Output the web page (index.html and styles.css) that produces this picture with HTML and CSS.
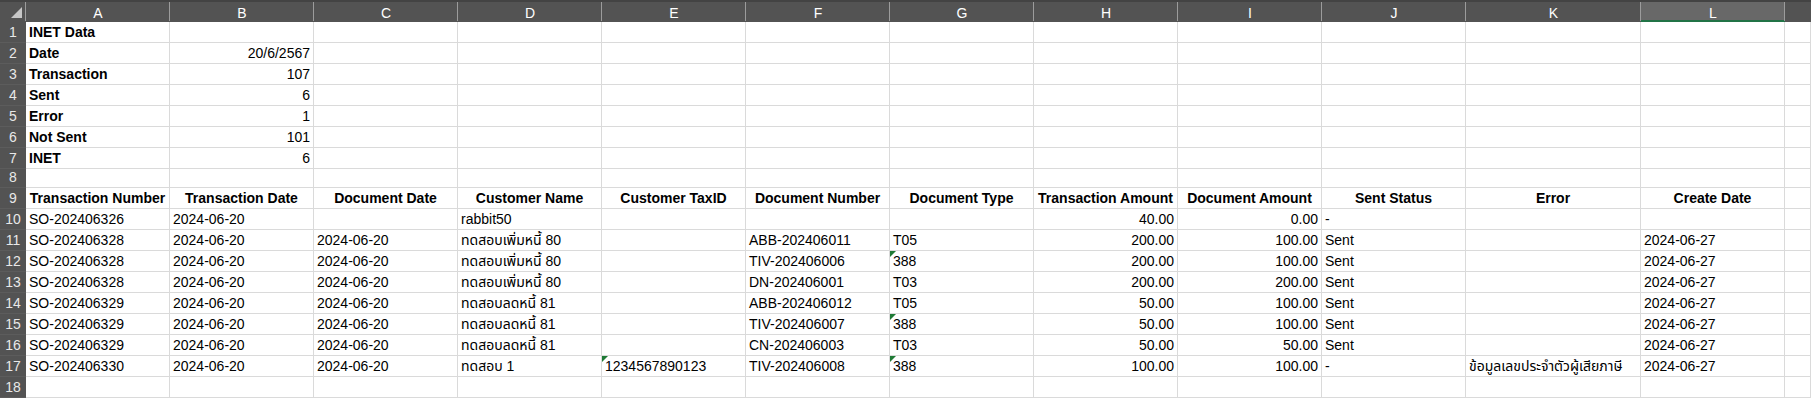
FILE: index.html
```html
<!DOCTYPE html>
<html>
<head>
<meta charset="utf-8">
<link rel="stylesheet" href="styles.css">
</head>
<body>
<div class="sheet">
  <div class="corner"><svg width="12" height="12" viewBox="0 0 12 12"><polygon points="11,0 11,11 0,11" fill="#c6c6c6"/></svg></div>
  <div class="hd">A</div><div class="hd">B</div><div class="hd">C</div><div class="hd">D</div><div class="hd">E</div><div class="hd">F</div><div class="hd">G</div><div class="hd">H</div><div class="hd">I</div><div class="hd">J</div><div class="hd">K</div><div class="hd sel">L</div><div class="hd last"></div>

  <div class="rh">1</div><div class="c b">INET Data</div><div class="c"></div><div class="c"></div><div class="c"></div><div class="c"></div><div class="c"></div><div class="c"></div><div class="c"></div><div class="c"></div><div class="c"></div><div class="c"></div><div class="c"></div><div class="c"></div>
  <div class="rh">2</div><div class="c b">Date</div><div class="c r">20/6/2567</div><div class="c"></div><div class="c"></div><div class="c"></div><div class="c"></div><div class="c"></div><div class="c"></div><div class="c"></div><div class="c"></div><div class="c"></div><div class="c"></div><div class="c"></div>
  <div class="rh">3</div><div class="c b">Transaction</div><div class="c r">107</div><div class="c"></div><div class="c"></div><div class="c"></div><div class="c"></div><div class="c"></div><div class="c"></div><div class="c"></div><div class="c"></div><div class="c"></div><div class="c"></div><div class="c"></div>
  <div class="rh">4</div><div class="c b">Sent</div><div class="c r">6</div><div class="c"></div><div class="c"></div><div class="c"></div><div class="c"></div><div class="c"></div><div class="c"></div><div class="c"></div><div class="c"></div><div class="c"></div><div class="c"></div><div class="c"></div>
  <div class="rh">5</div><div class="c b">Error</div><div class="c r">1</div><div class="c"></div><div class="c"></div><div class="c"></div><div class="c"></div><div class="c"></div><div class="c"></div><div class="c"></div><div class="c"></div><div class="c"></div><div class="c"></div><div class="c"></div>
  <div class="rh">6</div><div class="c b">Not Sent</div><div class="c r">101</div><div class="c"></div><div class="c"></div><div class="c"></div><div class="c"></div><div class="c"></div><div class="c"></div><div class="c"></div><div class="c"></div><div class="c"></div><div class="c"></div><div class="c"></div>
  <div class="rh">7</div><div class="c b">INET</div><div class="c r">6</div><div class="c"></div><div class="c"></div><div class="c"></div><div class="c"></div><div class="c"></div><div class="c"></div><div class="c"></div><div class="c"></div><div class="c"></div><div class="c"></div><div class="c"></div>
  <div class="rh">8</div><div class="c"></div><div class="c"></div><div class="c"></div><div class="c"></div><div class="c"></div><div class="c"></div><div class="c"></div><div class="c"></div><div class="c"></div><div class="c"></div><div class="c"></div><div class="c"></div><div class="c"></div>
  <div class="rh">9</div><div class="c b m">Transaction Number</div><div class="c b m">Transaction Date</div><div class="c b m">Document Date</div><div class="c b m">Customer Name</div><div class="c b m">Customer TaxID</div><div class="c b m">Document Number</div><div class="c b m">Document Type</div><div class="c b m">Transaction Amount</div><div class="c b m">Document Amount</div><div class="c b m">Sent Status</div><div class="c b m">Error</div><div class="c b m">Create Date</div><div class="c"></div>
  <div class="rh">10</div><div class="c">SO-202406326</div><div class="c">2024-06-20</div><div class="c"></div><div class="c">rabbit50</div><div class="c"></div><div class="c"></div><div class="c"></div><div class="c r">40.00</div><div class="c r">0.00</div><div class="c">-</div><div class="c"></div><div class="c"></div><div class="c"></div>
  <div class="rh">11</div><div class="c">SO-202406328</div><div class="c">2024-06-20</div><div class="c">2024-06-20</div><div class="c">ทดสอบเพิ่มหนี้ 80</div><div class="c"></div><div class="c">ABB-202406011</div><div class="c">T05</div><div class="c r">200.00</div><div class="c r">100.00</div><div class="c">Sent</div><div class="c"></div><div class="c">2024-06-27</div><div class="c"></div>
  <div class="rh">12</div><div class="c">SO-202406328</div><div class="c">2024-06-20</div><div class="c">2024-06-20</div><div class="c">ทดสอบเพิ่มหนี้ 80</div><div class="c"></div><div class="c">TIV-202406006</div><div class="c"><span class="flag"></span>388</div><div class="c r">200.00</div><div class="c r">100.00</div><div class="c">Sent</div><div class="c"></div><div class="c">2024-06-27</div><div class="c"></div>
  <div class="rh">13</div><div class="c">SO-202406328</div><div class="c">2024-06-20</div><div class="c">2024-06-20</div><div class="c">ทดสอบเพิ่มหนี้ 80</div><div class="c"></div><div class="c">DN-202406001</div><div class="c">T03</div><div class="c r">200.00</div><div class="c r">200.00</div><div class="c">Sent</div><div class="c"></div><div class="c">2024-06-27</div><div class="c"></div>
  <div class="rh">14</div><div class="c">SO-202406329</div><div class="c">2024-06-20</div><div class="c">2024-06-20</div><div class="c">ทดสอบลดหนี้ 81</div><div class="c"></div><div class="c">ABB-202406012</div><div class="c">T05</div><div class="c r">50.00</div><div class="c r">100.00</div><div class="c">Sent</div><div class="c"></div><div class="c">2024-06-27</div><div class="c"></div>
  <div class="rh">15</div><div class="c">SO-202406329</div><div class="c">2024-06-20</div><div class="c">2024-06-20</div><div class="c">ทดสอบลดหนี้ 81</div><div class="c"></div><div class="c">TIV-202406007</div><div class="c"><span class="flag"></span>388</div><div class="c r">50.00</div><div class="c r">100.00</div><div class="c">Sent</div><div class="c"></div><div class="c">2024-06-27</div><div class="c"></div>
  <div class="rh">16</div><div class="c">SO-202406329</div><div class="c">2024-06-20</div><div class="c">2024-06-20</div><div class="c">ทดสอบลดหนี้ 81</div><div class="c"></div><div class="c">CN-202406003</div><div class="c">T03</div><div class="c r">50.00</div><div class="c r">50.00</div><div class="c">Sent</div><div class="c"></div><div class="c">2024-06-27</div><div class="c"></div>
  <div class="rh">17</div><div class="c">SO-202406330</div><div class="c">2024-06-20</div><div class="c">2024-06-20</div><div class="c">ทดสอบ 1</div><div class="c"><span class="flag"></span>1234567890123</div><div class="c">TIV-202406008</div><div class="c"><span class="flag"></span>388</div><div class="c r">100.00</div><div class="c r">100.00</div><div class="c">-</div><div class="c">ข้อมูลเลขประจำตัวผู้เสียภาษี</div><div class="c">2024-06-27</div><div class="c"></div>
  <div class="rh">18</div><div class="c"></div><div class="c"></div><div class="c"></div><div class="c"></div><div class="c"></div><div class="c"></div><div class="c"></div><div class="c"></div><div class="c"></div><div class="c"></div><div class="c"></div><div class="c"></div><div class="c"></div>
</div>
</body>
</html>
```

FILE: styles.css
```css
html, body {
  margin: 0;
  padding: 0;
  background: #ffffff;
}

body {
  font-family: "Liberation Sans", "Noto Sans Thai", "Noto Sans", sans-serif;
  overflow: hidden;
}

.sheet {
  display: grid;
  grid-template-columns: 26px repeat(10, 144px) 175px 144px 1fr;
  grid-template-rows: 22px repeat(7, 21px) 19px repeat(10, 21px);
  width: 1811px;
  height: 398px;
  overflow: hidden;
}

.corner {
  background: #535353;
  border-top: 2px solid #434343;
  box-sizing: border-box;
  display: flex;
  align-items: flex-end;
  justify-content: flex-end;
  padding: 0 3px 3px 0;
}

.corner svg {
  display: block;
}

.hd {
  background: #535353;
  border-top: 2px solid #434343;
  box-sizing: border-box;
  color: #ffffff;
  font-size: 14px;
  display: flex;
  align-items: center;
  justify-content: center;
  padding-top: 1px;
  position: relative;
}

.hd::before {
  content: "";
  position: absolute;
  left: -1px;
  top: 0;
  bottom: 1px;
  width: 1px;
  background: #9c9c9c;
}

.hd.sel {
  background: #686868;
  box-shadow: inset 0 -2px 0 #217346;
}

.rh {
  background: #535353;
  color: #e8e8e8;
  font-size: 14px;
  line-height: 16px;
  box-sizing: border-box;
  border-bottom: 1px solid #5c5c5c;
  display: flex;
  align-items: flex-end;
  justify-content: center;
  padding-bottom: 2px;
}

.c {
  box-sizing: border-box;
  border-right: 1px solid #dadada;
  border-bottom: 1px solid #dadada;
  font-size: 14px;
  line-height: 16px;
  color: #000000;
  padding: 0 3px 2px 3px;
  display: flex;
  align-items: flex-end;
  white-space: nowrap;
  overflow: hidden;
  position: relative;
}

.b {
  font-weight: bold;
}

.r {
  justify-content: flex-end;
}

.m {
  justify-content: center;
}

.flag {
  position: absolute;
  left: 0;
  top: 0;
  width: 0;
  height: 0;
  border-top: 6px solid #1f7a35;
  border-right: 6px solid transparent;
}
```
